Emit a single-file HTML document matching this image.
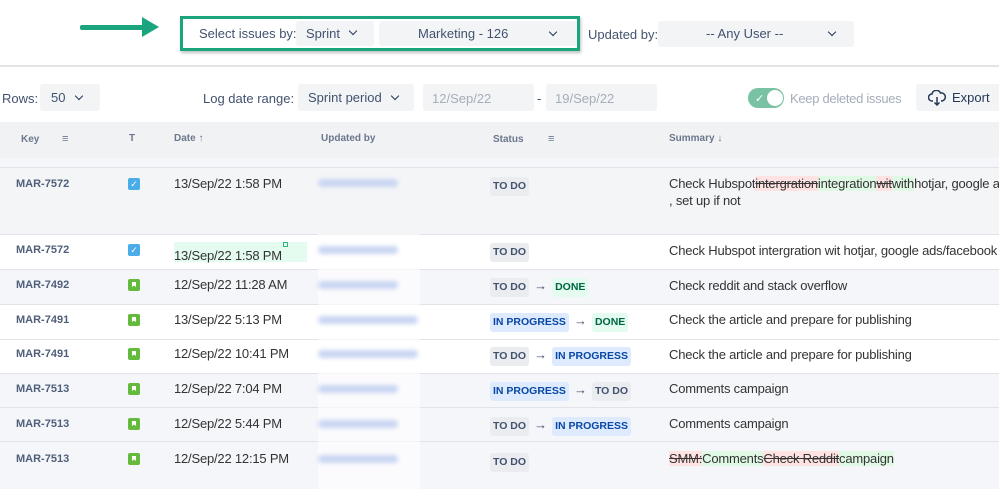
<!DOCTYPE html>
<html><head><meta charset="utf-8"><style>
*{margin:0;padding:0;box-sizing:border-box}
body{width:999px;height:489px;overflow:hidden;background:#fff;font-family:"Liberation Sans",Arial,sans-serif;color:#333;position:relative;font-size:13px}
.a{position:absolute;white-space:nowrap}
.box{position:absolute;background:#f3f4f6;border-radius:3px}
.lbl{color:#42526e;font-size:13px}
.chev{position:absolute;width:6px;height:6px;border-right:1.6px solid #253858;border-bottom:1.6px solid #253858;transform:rotate(45deg)}
.row{position:absolute;left:0;width:999px;border-top:1px solid #e1e3e8}
.key{position:absolute;left:16px;font-weight:bold;font-size:11px;color:#505f79;white-space:nowrap}
.date{position:absolute;left:174px;font-size:13px;color:#333;white-space:nowrap;letter-spacing:-.2px}
.sum{position:absolute;left:669px;font-size:13px;color:#333;white-space:nowrap;letter-spacing:-.2px}
.st{display:inline-block;font-weight:bold;font-size:10.5px;padding:3px 3px;border-radius:3px;line-height:13px}
.td{background:#ebecf0;color:#42526e}
.ip{background:#deebff;color:#0747a6}
.dn{background:#e3fcef;color:#006644}
.arr{display:inline-block;margin:0 5px;color:#42526e;font-size:13px;font-weight:bold}
.stc{position:absolute;left:490px;white-space:nowrap}
.ic{position:absolute;left:128px;width:12px;height:12px;border-radius:2px}
.bm{background:#63ba3c}
.bm:after{content:"";position:absolute;left:4px;top:3px;width:4px;height:5px;background:#fff;clip-path:polygon(0 0,100% 0,100% 100%,50% 70%,0 100%)}
.blur{position:absolute;left:318px;width:80px;height:8px;background:#c9d6f2;border-radius:4px;filter:blur(2px)}
.del{background:#ffe3e3;text-decoration:line-through}
.ins{background:#e0f9e4}
</style></head><body>
<div class="a" style="left:80px;top:25px;width:66px;height:5px;background:#1aa57f;border-radius:2px"></div>
<div class="a" style="left:142px;top:17px;width:0;height:0;border-left:17px solid #1aa57f;border-top:10px solid transparent;border-bottom:10px solid transparent"></div>
<div class="a" style="left:180px;top:16px;width:400px;height:35px;border:3px solid #1aa57f;box-shadow:1px 2px 3px rgba(0,0,0,.25)"></div>
<div class="a lbl" style="left:199px;top:26px">Select issues by:</div>
<div class="box" style="left:296px;top:21px;width:78px;height:25px"></div>
<div class="a lbl" style="left:306px;top:26px">Sprint</div>
<div class="chev" style="left:350px;top:28px"></div>
<div class="box" style="left:379px;top:21px;width:198px;height:25px"></div>
<div class="a lbl" style="left:418px;top:26px">Marketing - 126</div>
<div class="chev" style="left:550px;top:29px"></div>
<div class="a lbl" style="left:588px;top:27px">Updated by:</div>
<div class="box" style="left:658px;top:21px;width:196px;height:26px"></div>
<div class="a lbl" style="left:706px;top:26px">-- Any User --</div>
<div class="chev" style="left:829px;top:29px"></div>
<div class="a" style="left:0;top:65px;width:999px;height:2px;background:#e4e4e4"></div>
<div class="a lbl" style="left:2px;top:91px">Rows:</div>
<div class="box" style="left:40px;top:84px;width:60px;height:27px"></div>
<div class="a lbl" style="left:51px;top:90px">50</div>
<div class="chev" style="left:76px;top:93px"></div>
<div class="a lbl" style="left:203px;top:91px">Log date range:</div>
<div class="box" style="left:298px;top:84px;width:116px;height:27px"></div>
<div class="a lbl" style="left:308px;top:90px">Sprint period</div>
<div class="chev" style="left:392px;top:93px"></div>
<div class="box" style="left:423px;top:84px;width:111px;height:27px"></div>
<div class="a" style="left:432px;top:91px;color:#a5adba">12/Sep/22</div>
<div class="a" style="left:537px;top:91px;color:#42526e">-</div>
<div class="box" style="left:546px;top:84px;width:111px;height:27px"></div>
<div class="a" style="left:555px;top:91px;color:#a5adba">19/Sep/22</div>
<div class="a" style="left:748px;top:88px;width:36px;height:20px;border-radius:10px;background:#79c2a3"></div>
<div class="a" style="left:767px;top:90px;width:16px;height:16px;border-radius:8px;background:#fff"></div>
<div class="a" style="left:755px;top:92px;color:#fff;font-size:11px">✓</div>
<div class="a" style="left:790px;top:91px;color:#a5adba;letter-spacing:-.3px">Keep deleted issues</div>
<div class="box" style="left:916px;top:84px;width:90px;height:27px"></div>
<svg class="a" style="left:928px;top:90px" width="18" height="16" viewBox="0 0 18 16"><path d="M5 11H4a3.5 3.5 0 0 1 0-7 4.5 4.5 0 0 1 8.5-1 3.5 3.5 0 0 1 1.5 8h-1M9 7v8M6.5 12.5L9 15l2.5-2.5" fill="none" stroke="#253858" stroke-width="1.5"/></svg>
<div class="a lbl" style="left:952px;top:90px;color:#253858">Export</div>
<div class="a" style="left:0;top:122px;width:999px;height:36px;background:#f1f2f4"></div>
<div class="a" style="left:0;top:158px;width:999px;height:9px;background:#f4f6fa"></div>
<div class="a" style="left:21px;top:134px;font-size:10px;font-weight:bold;color:#6b778c">Key</div>
<div class="a" style="left:62px;top:133px;font-size:11px;color:#6b778c">≡</div>
<div class="a" style="left:129px;top:133px;font-size:10px;font-weight:bold;color:#6b778c">T</div>
<div class="a" style="left:174px;top:133px;font-size:10px;font-weight:bold;color:#6b778c">Date ↑</div>
<div class="a" style="left:321px;top:133px;font-size:10px;font-weight:bold;color:#6b778c">Updated by</div>
<div class="a" style="left:493px;top:134px;font-size:10px;font-weight:bold;color:#6b778c">Status</div>
<div class="a" style="left:548px;top:133px;font-size:11px;color:#6b778c">≡</div>
<div class="a" style="left:669px;top:133px;font-size:10px;font-weight:bold;color:#6b778c">Summary ↓</div>
<div class="row" style="top:167px;height:67px;background:#f4f5f7"></div>
<div class="row" style="top:234px;height:35px;background:#fff"></div>
<div class="row" style="top:269px;height:35px;background:#f4f6fa"></div>
<div class="row" style="top:304px;height:35px;background:#fff"></div>
<div class="row" style="top:339px;height:34px;background:#fff"></div>
<div class="row" style="top:373px;height:34px;background:#f4f6fa"></div>
<div class="row" style="top:407px;height:34px;background:#f4f6fa"></div>
<div class="row" style="top:441px;height:48px;background:#f4f6fa"></div>
<div class="a" style="left:318px;top:234px;width:102px;height:255px;background:#fff;opacity:.6"></div>

<div class="key" style="top:178px">MAR-7572</div><div class="ic" style="top:178px;background:#4bade8;color:#fff;font-size:9px;text-align:center;line-height:12px">✓</div>
<div class="date" style="top:176px">13/Sep/22 1:58 PM</div><div class="blur" style="top:179px"></div>
<div class="stc" style="top:177px"><span class="st td">TO DO</span></div>
<div class="sum" style="top:176px">Check Hubspot<span class="del">intergration</span><span class="ins">integration</span><span class="del">wit</span><span class="ins">with</span>hotjar, google ads</div>
<div class="sum" style="top:193px">, set up if not</div>

<div class="key" style="top:244px">MAR-7572</div><div class="ic" style="top:244px;background:#4bade8;color:#fff;font-size:9px;text-align:center;line-height:12px">✓</div>
<div class="a" style="left:174px;top:242px;width:133px;height:20px;background:#e3fcef"></div>
<div class="date" style="top:248px">13/Sep/22 1:58 PM</div><div class="a" style="left:283px;top:242px;width:5px;height:5px;border:1.3px solid #36b37e"></div>
<div class="blur" style="top:246px"></div>
<div class="stc" style="top:243px"><span class="st td">TO DO</span></div>
<div class="sum" style="top:243px">Check Hubspot intergration wit hotjar, google ads/facebook</div>

<div class="key" style="top:279px">MAR-7492</div><div class="ic bm" style="top:279px"></div>
<div class="date" style="top:277px">12/Sep/22 11:28 AM</div><div class="blur" style="top:281px"></div>
<div class="stc" style="top:278px"><span class="st td">TO DO</span><span class="arr">→</span><span class="st dn">DONE</span></div>
<div class="sum" style="top:278px">Check reddit and stack overflow</div>

<div class="key" style="top:314px">MAR-7491</div><div class="ic bm" style="top:314px"></div>
<div class="date" style="top:312px">13/Sep/22 5:13 PM</div><div class="blur" style="top:316px;width:100px"></div>
<div class="stc" style="top:313px"><span class="st ip">IN PROGRESS</span><span class="arr">→</span><span class="st dn">DONE</span></div>
<div class="sum" style="top:312px">Check the article and prepare for publishing</div>

<div class="key" style="top:348px">MAR-7491</div><div class="ic bm" style="top:348px"></div>
<div class="date" style="top:346px">12/Sep/22 10:41 PM</div><div class="blur" style="top:350px;width:100px"></div>
<div class="stc" style="top:347px"><span class="st td">TO DO</span><span class="arr">→</span><span class="st ip">IN PROGRESS</span></div>
<div class="sum" style="top:347px">Check the article and prepare for publishing</div>

<div class="key" style="top:383px">MAR-7513</div><div class="ic bm" style="top:383px"></div>
<div class="date" style="top:381px">12/Sep/22 7:04 PM</div><div class="blur" style="top:385px"></div>
<div class="stc" style="top:382px"><span class="st ip">IN PROGRESS</span><span class="arr">→</span><span class="st td">TO DO</span></div>
<div class="sum" style="top:381px">Comments campaign</div>

<div class="key" style="top:418px">MAR-7513</div><div class="ic bm" style="top:418px"></div>
<div class="date" style="top:416px">12/Sep/22 5:44 PM</div><div class="blur" style="top:420px"></div>
<div class="stc" style="top:417px"><span class="st td">TO DO</span><span class="arr">→</span><span class="st ip">IN PROGRESS</span></div>
<div class="sum" style="top:416px">Comments campaign</div>

<div class="key" style="top:453px">MAR-7513</div><div class="ic bm" style="top:453px"></div>
<div class="date" style="top:451px">12/Sep/22 12:15 PM</div><div class="blur" style="top:455px"></div>
<div class="stc" style="top:453px"><span class="st td">TO DO</span></div>
<div class="sum" style="top:451px"><span class="del">SMM:</span><span class="ins">Comments</span><span class="del">Check Reddit</span><span class="ins">campaign</span></div>
</body></html>
